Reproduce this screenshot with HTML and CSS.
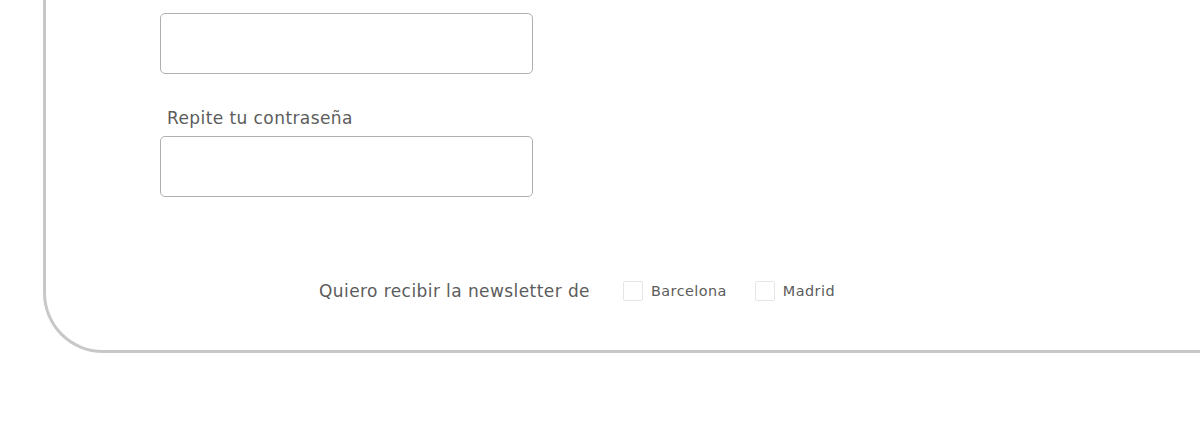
FILE: index.html
```html
<!DOCTYPE html>
<html lang="es">
<head>
<meta charset="utf-8">
<title>Registro</title>
<link rel="stylesheet" href="styles.css">
</head>
<body>
<div class="card">
  <div class="field">
    <div class="input"></div>
  </div>
  <div class="field">
    <label class="label">Repite tu contraseña</label>
    <div class="input"></div>
  </div>
  <div class="newsletter">
    <span class="nl-text">Quiero recibir la newsletter de</span>
    <span class="option"><span class="check"></span><span class="opt-text">Barcelona</span></span>
    <span class="option"><span class="check"></span><span class="opt-text">Madrid</span></span>
  </div>
</div>
</body>
</html>
```
FILE: styles.css
```css
html, body {
  margin: 0;
  background: #ffffff;
  overflow: hidden;
}
body {
  font-family: "DejaVu Sans", sans-serif;
  color: #5c5c5c;
}
.card {
  margin-left: 43px;
  border-left: 3px solid #c8c8c8;
  border-bottom: 3px solid #c8c8c8;
  border-bottom-left-radius: 60px;
  padding: 13px 0 0 114px;
  box-sizing: content-box;
  height: 337px;
}
.field {
  display: flex;
  flex-direction: column;
}
.label {
  display: block;
  margin: 34px 0 8px 7px;
  font-size: 17px;
  line-height: 20px;
  letter-spacing: 0.42px;
  color: #5c5c5c;
}
.input {
  width: 373px;
  height: 61px;
  box-sizing: border-box;
  border: 1.5px solid #b0b0b0;
  border-radius: 5px;
  background: #ffffff;
}
.newsletter {
  display: flex;
  align-items: center;
  height: 21px;
  margin-top: 83px;
  padding-left: 159px;
}
.nl-text {
  font-size: 17px;
  letter-spacing: 0.42px;
  margin-right: 33px;
  white-space: nowrap;
}
.option {
  display: flex;
  align-items: center;
  margin-right: 28px;
}
.check {
  width: 20px;
  height: 20px;
  box-sizing: border-box;
  border: 1px solid #e6e6e6;
  border-radius: 2px;
  margin-right: 8px;
}
.opt-text {
  font-size: 14.4px;
  letter-spacing: 0.45px;
  color: #5c5c5c;
}
```
